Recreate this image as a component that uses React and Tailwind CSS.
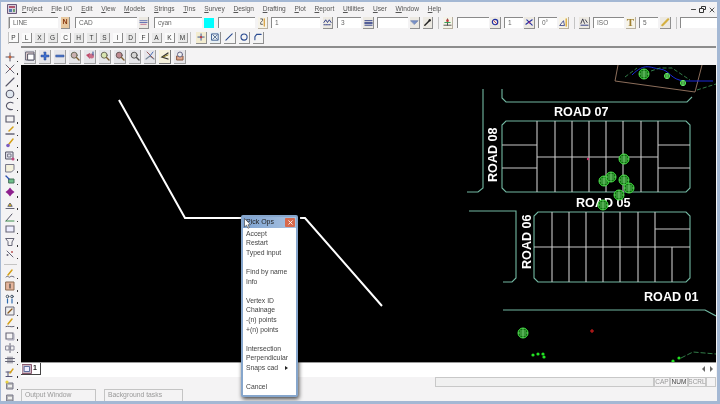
import React from "react";
import { Minus, X } from "lucide-react";

const menus = [
  ["P", "roject"],
  ["F", "ile I/O"],
  ["E", "dit"],
  ["V", "iew"],
  ["M", "odels"],
  ["S", "trings"],
  ["T", "ins"],
  ["S", "urvey"],
  ["D", "esign"],
  ["D", "rafting"],
  ["P", "lot"],
  ["R", "eport"],
  ["U", "tilities"],
  ["U", "ser"],
  ["W", "indow"],
  ["H", "elp"],
];

const letters = [
  ["P", true],
  ["L", true],
  ["X", false],
  ["G", false],
  ["C", true],
  ["H", false],
  ["T", false],
  ["S", false],
  ["I", true],
  ["D", false],
  ["F", true],
  ["A", false],
  ["K", true],
  ["M", false],
];

const popupItems = [
  "Accept",
  "Restart",
  "Typed input",
  null,
  "Find by name",
  "Info",
  null,
  "Vertex ID",
  "Chainage",
  "-(n) points",
  "+(n) points",
  null,
  "Intersection",
  "Perpendicular",
  "Snaps cad",
  null,
  "Cancel",
];

function Glyph({ children, size = 10 }) {
  return (
    <svg width={size} height={size} viewBox="0 0 10 10" fill="none" strokeLinecap="round">
      {children}
    </svg>
  );
}

// left toolbar drawings
const sideIcons = [
  <><path d="M5 1v8M1 5h8" stroke="#556" /><circle cx="5" cy="5" r="1.5" fill="#c8643c" /></>,
  <><path d="M1 1l8 8M9 1l-8 8" stroke="#667" /><circle cx="5" cy="5" r="1" fill="#b55" /></>,
  <path d="M1 9l8-8" stroke="#556" strokeWidth="1.1" />,
  <circle cx="5" cy="5" r="3.8" stroke="#556" strokeWidth="1.1" fill="#dfe6ee" />,
  <path d="M8 2C4 0 1 3 1.5 5.5S5 9 7.5 8.5" stroke="#556" strokeWidth="1.1" />,
  <path d="M1 2h8v6H1z" stroke="#556" strokeWidth="1.1" />,
  <><path d="M4 5l4-4" stroke="#d4a017" strokeWidth="1.5" /><path d="M1 8h8" stroke="#667" strokeWidth="1.5" strokeDasharray="1.5 .7" /></>,
  <><path d="M4 6l4-5" stroke="#d4a017" strokeWidth="1.5" /><circle cx="3" cy="7.5" r="1.8" fill="#7a5cc0" /></>,
  <><path d="M1 1h7v7H1z" stroke="#556" fill="#e8e8f0" /><path d="M3 3h3v3H3z" stroke="#778" /><circle cx="8" cy="8" r="1.5" fill="#c04a80" /></>,
  <path d="M1 1.5h8v5L6.5 9H1z" stroke="#778" fill="#f4f1dc" />,
  <><path d="M4 4h5v4H4z" fill="#6fbf8a" stroke="#46705a" /><path d="M1 1l3 3" stroke="#2a4fb0" strokeWidth="1.3" /></>,
  <path d="M5 .5L7 3 5 5.5 3 3zM5 4.5L7 7 5 9.5 3 7zM3 3L5 5 3 7 .5 5zM7 3L9.5 5 7 7 5 5z" fill="#8d1f8d" />,
  <><path d="M1 8.5h8" stroke="#667" strokeWidth="1.1" /><path d="M3 6l2-3 2 3z" stroke="#667" fill="#e6b800" /></>,
  <><path d="M1 9l6-7" stroke="#556" strokeWidth="1" /><path d="M1 9h8" stroke="#3a8f4d" strokeWidth="1" /></>,
  <path d="M1 2h8v6H1z" stroke="#667" strokeWidth="1.1" fill="#eef" />,
  <path d="M1 1.5h8L7 5v3.5H3V5z" stroke="#667" strokeWidth="1" />,
  <><path d="M2 2l6 6" stroke="#667" /><circle cx="2.5" cy="6" r="1" fill="#667" /><circle cx="7" cy="3" r="1" fill="#b55" /></>,
  null,
  <><path d="M1 8c2-2 3 1 4 0s2-1 4 0" stroke="#667" /><path d="M3 6l4-5" stroke="#d4a017" strokeWidth="1.5" /></>,
  <><path d="M1 1h8v8H1z" fill="#e4b49c" stroke="#8a6a50" /><path d="M5 3v4" stroke="#444" strokeWidth="1.2" /></>,
  <><circle cx="2.5" cy="2.5" r="1.3" stroke="#456" /><circle cx="7" cy="2.5" r="1.3" stroke="#456" /><path d="M2.5 5v4M7 5v4" stroke="#2d6cb0" strokeWidth="1.2" /></>,
  <><path d="M1 1h8v8H1z" stroke="#667" fill="#eee" /><path d="M3 7l4-4" stroke="#8a5a20" strokeWidth="1.3" /></>,
  <><path d="M1 8.5c2-1 5 1 8 0" stroke="#667" /><path d="M3 6l4-5" stroke="#d4a017" strokeWidth="1.5" /></>,
  <><path d="M1 2h7v6H1z" stroke="#667" strokeWidth="1.1" /><path d="M9 3v6H3" stroke="#aab" /></>,
  <><path d="M5 .5v9" stroke="#667" /><path d="M1 3h3v4H1zM6 3h3v4H6z" stroke="#889" /></>,
  <path d="M.5 3.5h9M.5 6.5h9M3 2v6M5 2v6M7 2v6" stroke="#667" />,
  <><path d="M1 8.5h6M3 8V4M1 4h5" stroke="#557" /><path d="M5 5l3-4" stroke="#d4a017" strokeWidth="1.4" /></>,
  <><path d="M2 3h6v6H2z" fill="#bbb" stroke="#778" /><path d="M3 5h4v2H3z" fill="#eee" /><circle cx="2" cy="2" r="1.6" fill="#e8d040" /></>,
  <><path d="M2 3h6v6H2z" fill="#bbb" stroke="#778" /><path d="M3 5h4v2H3z" fill="#eee" /></>,
];

// inner toolbar drawings
const viewIcons = [
  <><path d="M1 1h8v8H1z" stroke="#667" fill="#e8d5d5" /><path d="M3 3h6v6H3z" stroke="#556" fill="#fff" /></>,
  <path d="M4 1h2v3h3v2H6v3H4V6H1V4h3z" fill="#3f6fd0" stroke="#2a4a90" strokeWidth=".5" />,
  <path d="M1 4h8v2H1z" fill="#4f78c8" stroke="#2a4a90" strokeWidth=".5" />,
  <><circle cx="4.2" cy="4.2" r="3" fill="#c9b0b0" stroke="#6a6a5a" /><path d="M6.5 6.5L9 9" stroke="#806030" strokeWidth="1.4" /></>,
  <><path d="M1 4l4-2v6z" fill="#c04a6a" /><circle cx="6.5" cy="5" r="2.5" fill="#c9708a" /><path d="M8 1v3" stroke="#2a4a90" /></>,
  <><circle cx="4.2" cy="4.2" r="3" fill="#d8e4b0" stroke="#6a6a5a" /><path d="M6.5 6.5L9 9" stroke="#806030" strokeWidth="1.4" /></>,
  <><circle cx="4.2" cy="4.2" r="3" fill="#c08a90" stroke="#6a5a5a" /><path d="M6.5 6.5L9 9" stroke="#806030" strokeWidth="1.4" /></>,
  <><circle cx="4.2" cy="4.2" r="3" fill="#d4d4d4" stroke="#555" /><path d="M6.5 6.5L9 9" stroke="#555" strokeWidth="1.4" /></>,
  <><path d="M1 8l4-3 4 3" stroke="#7a8a9a" strokeWidth="1.2" /><path d="M2 1l6 6" stroke="#9a5a5a" /><path d="M8 1L5 5" stroke="#4a6ab0" /></>,
  <><path d="M8 2L2 6l6 2" stroke="#333" strokeWidth="1.3" /><path d="M3 6l5-2" stroke="#8a7a20" /></>,
  <><path d="M2 5h6v4H2z" fill="#e0a890" stroke="#8a5a40" /><circle cx="5" cy="3.5" r="2.5" stroke="#668" fill="#eee" /></>,
];

function ToolButton({ className = "", children, pressed }) {
  return (
    <div
      className={`flex h-[12px] items-center justify-center border-r border-b ${
        pressed ? "border-[#b8b0a0] bg-[#f6f3e8]" : "border-[#8f8f8f] bg-[#ece9e2]"
      } ${className}`}
    >
      {children}
    </div>
  );
}

function Field({ className = "", text }) {
  return (
    <div className={`flex h-[11px] items-center truncate border-t border-l border-[#8a8a8a] bg-white pl-[3px] text-[6.5px] text-[#666] ${className}`}>
      {text}
    </div>
  );
}

function Sep({ className = "" }) {
  return <div className={`h-[12px] w-px bg-[#c4c4c4] ${className}`} />;
}

function Tree({ x, y, r = 5 }) {
  return (
    <g>
      <circle cx={x} cy={y} r={r} fill="#0e6e0e" stroke="#46e046" strokeWidth="1" />
      <path d={`M${x - r} ${y}h${r * 2}M${x} ${y - r}v${r * 2}M${x - r * 0.6} ${y + 2}h${r * 1.2}M${x - r * 0.6} ${y - 2}h${r * 1.2}`} stroke="#9cf29c" strokeWidth=".6" />
    </g>
  );
}

function DrawingCanvas() {
  const teal = "#72b8a2";
  const grey = "#c8c8c8";
  const road = "text-[12.6px] font-bold";
  return (
    <svg className="block h-[297px] w-[695px] bg-black" viewBox="21 65 695 297">
      <path d="M119 100L185 218H245M300 218H305L382 306" stroke="#fff" strokeWidth="2" fill="none" />

      {/* top right survey area */}
      <path d="M618 65L615 81 695 92 702 65" stroke="#b08a72" strokeWidth=".8" fill="none" />
      <path d="M632 75C645 62 650 68 660 69S670 80 685 81H713" stroke="#1a2ad8" strokeWidth="1" fill="none" />
      <path d="M625 77L637 68M651 71L660 68H672L690 80M697 90L716 84" stroke="#3d9a5a" strokeWidth=".8" strokeDasharray="4 2" fill="none" />
      <Tree x={644} y={74} />
      <Tree x={667} y={76} r={2.6} />
      <Tree x={683} y={83} r={2.6} />

      {/* kerbs */}
      <g stroke={teal} strokeWidth="1.1" fill="none">
        <path d="M483 89V188L478 192H467" />
        <path d="M502 89V98L506 102H687L692 97" />
        <path d="M506 121H686L690 125V188L686 192H506L502 188V125Z" />
        <path d="M538 212H686L690 216V278L686 282H538L534 278V216Z" />
        <path d="M469 211H516V278L512 282H503" />
        <path d="M503 310H705L716 316" />
      </g>

      {/* lots */}
      <g stroke={grey} strokeWidth="1.1" fill="none">
        <path d="M537 121V192M555 121V192M572 121V192M589 121V192M606 121V192M623 139V192M641 121V192M658 121V192" />
        <path d="M537 157H658M502 145H537M502 168H537M658 145H690M658 168H690" />
        <path d="M552 212V282M569 212V282M586 212V282M603 212V282M620 212V282M638 212V282M655 212V282M672 247V282" />
        <path d="M534 247H690M655 229H690" />
      </g>
      <path d="M623 121V139" stroke="#ddd" />

      <g fill="#fff" className="font-['Liberation_Sans',Arial,sans-serif]">
        <text x="554" y="116" className={road}>ROAD 07</text>
        <text x="576" y="207" className={road}>ROAD 05</text>
        <text x="644" y="301" className={road}>ROAD 01</text>
        <text transform="translate(497 182) rotate(-90)" className={road}>ROAD 08</text>
        <text transform="translate(531 269) rotate(-90)" className={road}>ROAD 06</text>
      </g>

      <Tree x={624} y={159} />
      <Tree x={604} y={181} />
      <Tree x={611} y={177} />
      <Tree x={624} y={180} />
      <Tree x={629} y={188} />
      <Tree x={619} y={195} />
      <Tree x={603} y={205} />
      <Tree x={523} y={333} />

      <circle cx="588" cy="159" r="1.2" fill="#d0306a" />
      <path d="M590 331h4M592 329v4" stroke="#e02020" strokeWidth="1" />
      <g fill="#22e022">
        <circle cx="533" cy="355" r="1.6" />
        <circle cx="538" cy="354" r="1.6" />
        <circle cx="543" cy="354" r="1.6" />
        <circle cx="544" cy="357" r="1.6" />
        <circle cx="673" cy="361" r="1.6" />
        <circle cx="679" cy="358" r="1.6" />
      </g>
      <path d="M681 358L687 355 693 352 716 354" stroke="#3d9a5a" strokeWidth=".8" strokeDasharray="5 2" fill="none" />
    </svg>
  );
}

function QuickOps() {
  return (
    <div className="absolute top-[213px] left-[240px] flex h-[182px] w-[57px] flex-col rounded-[2px] border-2 border-[#86a6cc] bg-white shadow-[1px_2px_4px_rgba(0,0,0,0.7)]">
      <div className="relative flex h-[11px] shrink-0 items-center justify-between bg-gradient-to-r from-[#7ea3d2] to-[#a9c2e0] pl-[3px] text-[7px] text-[#222]">
        <span>Pick Ops</span>
        <span className="mr-[1px] flex h-[9px] w-[10px] items-center justify-center rounded-[1px] bg-[#d8694c] text-white">
          <X size={7} strokeWidth={3} />
        </span>
        <svg className="absolute top-[1px] left-[1px]" width="7" height="11" viewBox="0 0 7 11">
          <path d="M.5.5V9L2.5 7.2 4 10.3 5.3 9.6 4 6.7H6.5Z" fill="#fff" stroke="#333" strokeWidth=".6" />
        </svg>
      </div>
      <div className="flex flex-col pt-px pl-[3px] text-[6.8px] text-[#444]">
        {popupItems.map((item, i) => (
          <div key={i} className="flex h-[9.6px] shrink-0 items-center justify-between pr-[8px] whitespace-nowrap">
            <span>{item}</span>
            {item === "Snaps cad" && <span className="h-0 w-0 border-y-[2px] border-l-[3px] border-y-transparent border-l-[#222]" />}
          </div>
        ))}
      </div>
    </div>
  );
}

export default function App() {
  return (
    <div className="relative flex h-[404px] w-[720px] flex-col overflow-hidden border-t-2 border-r-[3px] border-b-[3px] border-l border-[#a4b8d4] bg-[#f4f3f4] font-['Liberation_Sans',Arial,sans-serif] text-[#555] blur-[0.3px]">
      {/* menu bar */}
      <div className="flex h-[13px] shrink-0 items-center pl-[6px] text-[6.6px]">
        <svg width="10" height="10" viewBox="0 0 10 10" className="mr-[5px]">
          <path d="M.5.5h9v9h-9z" fill="#d9d0dc" stroke="#6a5a7a" />
          <path d="M2 2h6v2H2z" fill="#b0566e" />
          <path d="M2 5h3v3H2z" fill="#5a7ab0" />
          <path d="M6 5h2v3H6z" fill="#6aa070" />
        </svg>
        <div className="flex gap-[8.7px]">
          {menus.map(([key, rest], i) => (
            <span key={i} className="whitespace-nowrap">
              <span className="underline">{key}</span>
              {rest}
            </span>
          ))}
        </div>
        <div className="mt-[2px] mr-[1px] ml-auto flex items-center gap-[2px] text-[#333]">
          <Minus size={7} strokeWidth={3} />
          <svg width="7" height="7" viewBox="0 0 7 7" fill="none" stroke="#333">
            <path d="M2.5 2V.5h4v3H5M.5 2.5h4v4h-4z" />
          </svg>
          <X size={8} strokeWidth={2.5} />
        </div>
      </div>

      {/* layer / line style toolbar */}
      <div className="flex h-[15px] shrink-0 items-center pl-[7px]">
        <Sep />
        <Field className="w-[49px]" text="LINE" />
        <ToolButton className="ml-[3px] w-[9px] bg-[#e8c9a0]!">
          <span className="text-[7px] font-bold text-[#8a3a10]">N</span>
        </ToolButton>
        <Field className="ml-[5px] w-[62px]" text="CAD" />
        <ToolButton className="ml-[2px] w-[10px]">
          <Glyph size={9}><path d="M1 3h8M1 5h8" stroke="#5a6ab0" /><path d="M2 7h6" stroke="#c06a8a" /></Glyph>
        </ToolButton>
        <Field className="ml-[5px] w-[48px]" text="cyan" />
        <div className="ml-[2px] h-[10px] w-[10px] bg-[#00ffff]" />
        <Field className="ml-[4px] w-[37px]" />
        <ToolButton className="ml-[3px] w-[10px]" pressed>
          <Glyph size={9}><path d="M3 1h2v2L3 5v2h2" stroke="#555" /><path d="M7 1v8" stroke="#d8a040" strokeWidth="1.4" /></Glyph>
        </ToolButton>
        <Field className="ml-[3px] w-[49px]" text="1" />
        <ToolButton className="ml-[3px] w-[10px]">
          <Glyph size={9}><path d="M1 5L3 2l2 3 2-3 2 3" stroke="#203080" /><path d="M1 7.5h8" stroke="#203080" strokeDasharray="1 1" /></Glyph>
        </ToolButton>
        <Field className="ml-[4px] w-[24px]" text="3" />
        <ToolButton className="ml-[2px] w-[11px]">
          <Glyph size={9}><path d="M1 3h8" stroke="#203080" /><path d="M1 5.5h8" stroke="#203080" strokeWidth="1.6" /><path d="M1 8h8" stroke="#203080" /></Glyph>
        </ToolButton>
        <Field className="ml-[3px] w-[31px]" />
        <ToolButton className="ml-[2px] w-[10px]">
          <Glyph size={9}><path d="M1 3h8L5 7z" fill="#7a92c8" stroke="#51689c" strokeWidth=".6" /></Glyph>
        </ToolButton>
        <ToolButton className="ml-[3px] w-[10px]">
          <Glyph size={9}><path d="M2 8l5-5" stroke="#222" strokeWidth="1.6" /><circle cx="7.5" cy="2.5" r="1.3" fill="#222" /></Glyph>
        </ToolButton>
        <Sep className="ml-[5px]" />
        <ToolButton className="ml-[4px] w-[10px]" pressed>
          <Glyph size={9}><path d="M5 1v7M1 8h8" stroke="#444" /><circle cx="5" cy="3" r="1.5" fill="#c03a3a" /><path d="M2 5h6" stroke="#2a9a4a" /></Glyph>
        </ToolButton>
        <Field className="ml-[4px] w-[32px]" />
        <ToolButton className="ml-px w-[11px]">
          <Glyph size={9}><circle cx="4.5" cy="4.5" r="3" stroke="#2030a0" strokeWidth="1.3" /><path d="M3 3l3 3" stroke="#c03a5a" /></Glyph>
        </ToolButton>
        <Field className="ml-[3px] w-[19px]" text="1" />
        <ToolButton className="ml-px w-[11px]">
          <Glyph size={9}><path d="M1 7l7-5M2 2l6 6" stroke="#2030a0" strokeWidth="1.2" /><circle cx="5" cy="5" r="1.2" fill="#a02a8a" /></Glyph>
        </ToolButton>
        <Field className="ml-[3px] w-[19px]" text="0°" />
        <ToolButton className="ml-[2px] w-[10px]" pressed>
          <Glyph size={9}><path d="M1 8l4-5 1 5z" stroke="#404a90" /><path d="M8 1v8" stroke="#d8a020" strokeWidth="1.4" strokeDasharray="1 .8" /></Glyph>
        </ToolButton>
        <Sep className="ml-[5px]" />
        <ToolButton className="ml-[4px] w-[11px]">
          <Glyph size={9}><path d="M1 6l2-5 2 5M6 2l2 3" stroke="#334" /><path d="M1 8h8" stroke="#203080" /></Glyph>
        </ToolButton>
        <Field className="ml-[3px] w-[31px]" text="ISO" />
        <ToolButton className="ml-[2px] w-[10px]" pressed>
          <span className="font-['Liberation_Serif',serif] text-[11px] leading-none font-bold text-[#a08030]">T</span>
        </ToolButton>
        <Field className="ml-[3px] w-[19px]" text="5" />
        <ToolButton className="ml-[2px] w-[11px]">
          <Glyph size={9}><path d="M1.5 8L8 1.5" stroke="#d4b040" strokeWidth="2.4" /></Glyph>
        </ToolButton>
        <Sep className="ml-[5px]" />
        <Field className="ml-[3px] w-[37px]" />
      </div>

      {/* snap toolbar */}
      <div className="flex h-[16px] shrink-0 items-center pl-[7px]">
        <Sep />
        <div className="flex gap-[3px]">
          {letters.map(([letter, pressed]) => (
            <div
              key={letter}
              className={`flex h-[10px] w-[10px] items-center justify-center border-r border-b text-[6.5px] text-[#333] ${
                pressed ? "border-[#8a8a8a] bg-[#fafafa]" : "border-[#9a9a9a] bg-[#e8e8e8]"
              }`}
            >
              {letter}
            </div>
          ))}
        </div>
        <Sep className="ml-[2px]" />
        <div className="ml-[5px] flex gap-[3px]">
          <ToolButton className="w-[11px] bg-[#f3ecd0]!">
            <Glyph size={9}><path d="M4.5 1v7M1 4.5h7" stroke="#2a4a90" /><circle cx="4.5" cy="4.5" r="1.3" fill="#c04040" /></Glyph>
          </ToolButton>
          <ToolButton className="w-[11px] bg-[#e8f0f4]!">
            <Glyph size={9}><path d="M1 1h7v7H1z" stroke="#3a5a90" /><path d="M2 2l5 5M7 2L2 7" stroke="#506a90" /></Glyph>
          </ToolButton>
          <ToolButton className="w-[12px] bg-[#f4f4f4]!">
            <Glyph size={9}><path d="M1 8l7-7" stroke="#2a4a90" strokeWidth="1.2" /></Glyph>
          </ToolButton>
          <ToolButton className="w-[11px] bg-[#f4f4f4]!">
            <Glyph size={9}><circle cx="4.5" cy="4.5" r="3.4" stroke="#2a4a90" strokeWidth="1.2" /></Glyph>
          </ToolButton>
          <ToolButton className="w-[11px] bg-[#f4f4f4]!">
            <Glyph size={9}><path d="M8 1.5H3L1 4v3.5" stroke="#2a4a90" strokeWidth="1.2" /></Glyph>
          </ToolButton>
        </div>
      </div>

      <div className="flex min-h-0 flex-1">
        {/* left toolbar */}
        <div className="flex w-[20px] shrink-0 flex-col pt-[5px]">
          {sideIcons.map((icon, i) =>
            icon ? (
              <div key={i} className="relative flex h-[12.3px] shrink-0 items-center pl-[4px]">
                <Glyph>{icon}</Glyph>
                <span className="absolute right-[3px] bottom-[1px] h-[1.5px] w-[1.5px] bg-[#333]" />
              </div>
            ) : (
              <div key={i} className="flex h-[8px] shrink-0 items-center pl-[3px] pr-[4px]">
                <div className="h-px w-full bg-[#c4c4c4]" />
              </div>
            )
          )}
        </div>

        <div className="flex min-w-0 flex-1 flex-col pr-px">
          {/* view toolbar */}
          <div className="flex h-[19px] shrink-0 items-center gap-[3px] border-t-2 border-[#8c8c8c] pl-[3px]">
            {viewIcons.map((icon, i) => (
              <div
                key={i}
                className={`flex h-[14px] w-[12px] items-center justify-center border-r border-b ${
                  i === 9 ? "border-[#777] bg-[#f6f2dc]" : "border-[#a0a0a0] bg-[#e6e6ea]"
                }`}
              >
                <Glyph>{icon}</Glyph>
              </div>
            ))}
          </div>

          <DrawingCanvas />

          {/* sheet tabs */}
          <div className="flex h-[15px] shrink-0 items-start justify-between border-t border-[#999] bg-white">
            <div className="flex h-[12px] w-[20px] items-center gap-[1px] border-r border-b border-[#444] pl-px text-[7px] font-bold text-[#222]">
              <Glyph>
                <path d="M.5.5h9v9h-9z" fill="#c9b8c4" stroke="#8a5a70" />
                <path d="M2.5 2.5h5v5h-5z" fill="#eef" stroke="#6070a0" />
              </Glyph>
              1
            </div>
            <div className="mt-[3px] mr-[3px] flex gap-[5px] text-[#555]">
              <span className="h-0 w-0 border-y-[3px] border-r-[3px] border-y-transparent border-r-[#666]" />
              <span className="h-0 w-0 border-y-[3px] border-l-[3px] border-y-transparent border-l-[#666]" />
            </div>
          </div>

          {/* status bar */}
          <div className="flex h-[11px] shrink-0 justify-end text-[6.5px] text-[#999]">
            <div className="h-[10px] w-[219px] border border-[#c8c8c8] bg-[#f0f0f0]" />
            <div className="flex h-[10px] w-[16px] items-center justify-center border border-[#c8c8c8]">CAP</div>
            <div className="flex h-[10px] w-[18px] items-center justify-center border border-[#c8c8c8] text-[#444]">NUM</div>
            <div className="flex h-[10px] w-[18px] items-center justify-center border border-[#c8c8c8]">SCRL</div>
            <div className="h-[10px] w-[10px] border border-[#c8c8c8]" />
          </div>

          {/* output tabs */}
          <div className="flex flex-1 items-end gap-[8px] text-[6.8px] text-[#999]">
            <div className="flex h-[12px] w-[75px] items-center border-x border-t border-[#c4c4c4] pl-[3px]">Output Window</div>
            <div className="flex h-[12px] w-[79px] items-center border-x border-t border-[#c4c4c4] pl-[3px]">Background tasks</div>
          </div>
        </div>
      </div>

      <QuickOps />
    </div>
  );
}
